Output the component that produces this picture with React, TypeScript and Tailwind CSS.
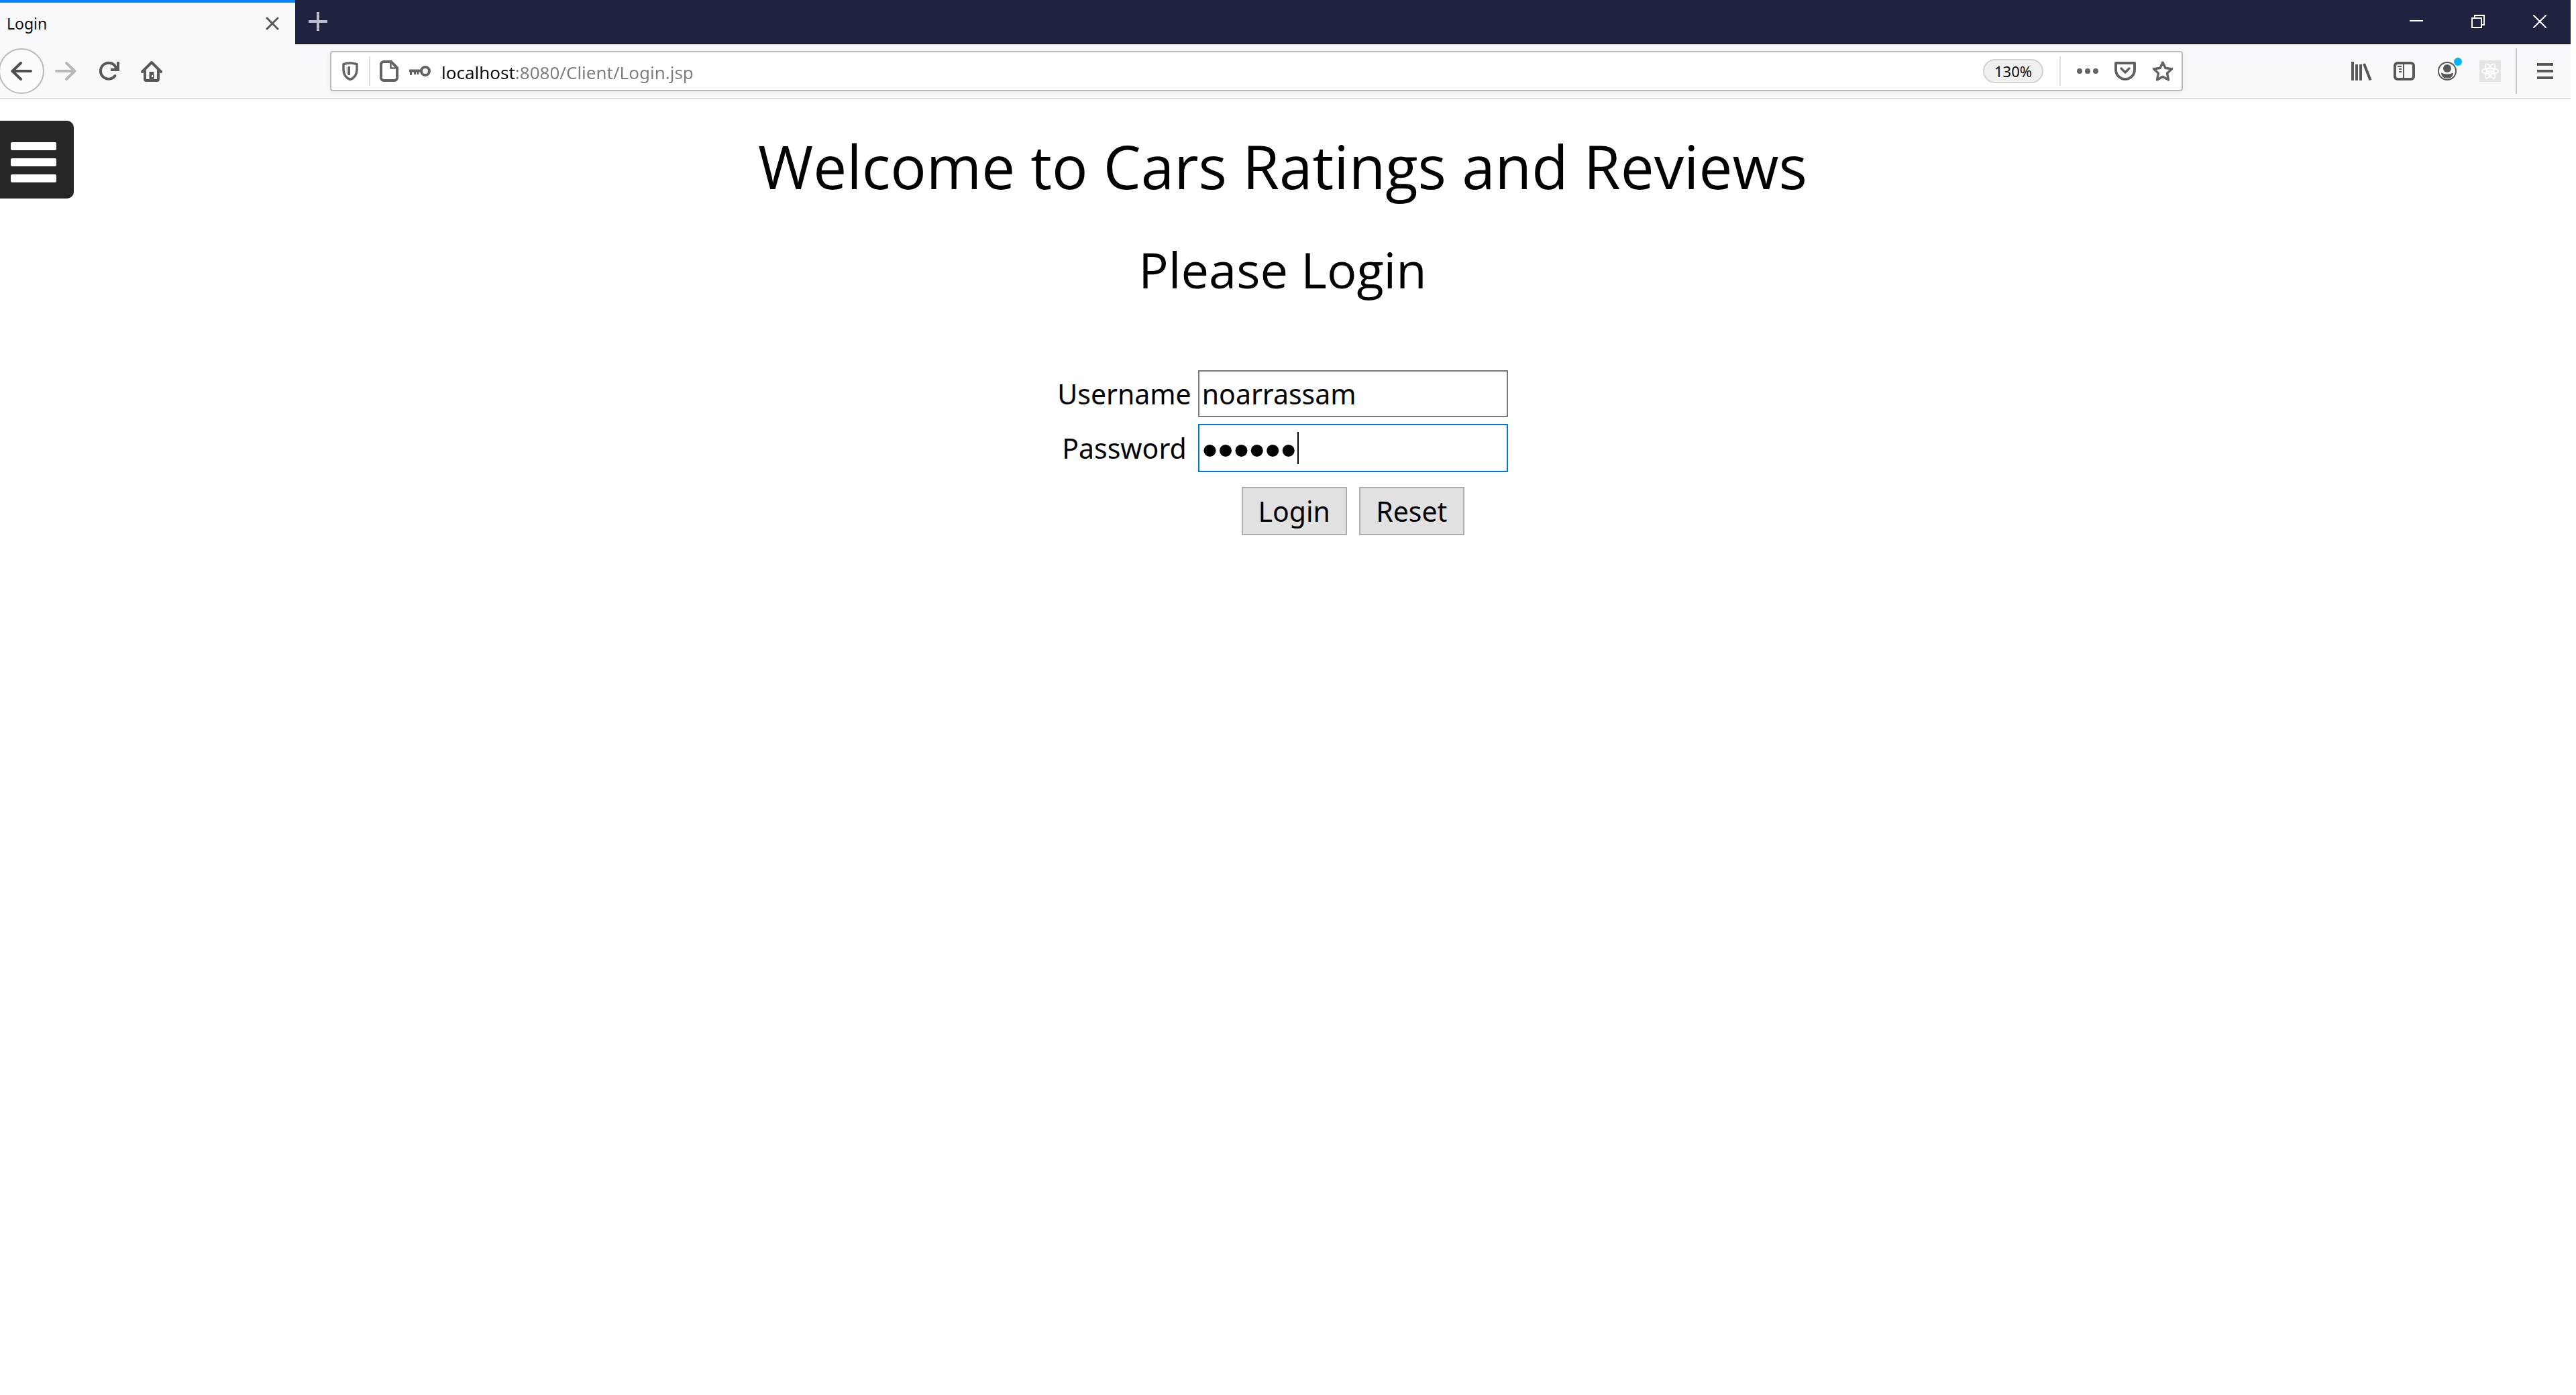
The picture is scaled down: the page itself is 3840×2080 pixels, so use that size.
import { useState, type ReactNode } from "react";

function Icon({ children, className = "size-8" }: { children: ReactNode; className?: string }) {
  return (
    <svg viewBox="0 0 32 32" className={className} fill="none" stroke="currentColor" strokeWidth="4" aria-hidden="true">
      {children}
    </svg>
  );
}

function ToolButton({ label, children }: { label: string; children: ReactNode }) {
  return (
    <button type="button" aria-label={label} className="flex h-16 w-16 shrink-0 items-center justify-center text-[#58585a]">
      {children}
    </button>
  );
}

function WindowButton({ label, children }: { label: string; children: ReactNode }) {
  return (
    <button type="button" aria-label={label} className="flex h-16 w-[92px] items-center justify-center text-white">
      <svg viewBox="0 0 20 20" className="size-5" fill="none" stroke="currentColor" strokeWidth="2" aria-hidden="true">
        {children}
      </svg>
    </button>
  );
}

function TabStrip() {
  return (
    <div className="flex h-[66px] bg-[#202340]">
      <div className="flex w-[440px] items-center justify-between border-t-4 border-[#0a84ff] bg-[#f9f9fb] pr-6 pl-2.5">
        <span className="text-[23px] leading-8 text-[#0c0c0d]">Login</span>
        <button type="button" aria-label="Close tab" className="text-[#58585a]">
          <svg viewBox="0 0 20 20" className="size-5" fill="none" stroke="currentColor" strokeWidth="3" strokeLinecap="round" aria-hidden="true">
            <path d="M2 2l16 16M18 2L2 18" />
          </svg>
        </button>
      </div>
      <div className="flex flex-1 justify-between border-b-2 border-[#1b1830]">
        <button type="button" aria-label="New tab" className="flex h-16 w-[68px] items-center justify-center text-[#bcbdc6]">
          <Icon>
            <path d="M16 2v28M2 16h28" />
          </Icon>
        </button>
        <div className="flex">
          <WindowButton label="Minimize">
            <path d="M0 9h20" />
          </WindowButton>
          <WindowButton label="Restore">
            <path d="M1 5h14v14H1zM5 5V1h14v14h-4" />
          </WindowButton>
          <WindowButton label="Close window">
            <path d="M0 0l20 20M20 0L0 20" />
          </WindowButton>
        </div>
      </div>
    </div>
  );
}

function AddressBar() {
  const [url, setUrl] = useState("localhost:8080/Client/Login.jsp");
  return (
    <div className="flex h-[60px] min-w-0 flex-1 items-center rounded-sm border-2 border-[#bcbcc0] bg-white text-[#636363] shadow-[0_2px_8px_rgba(0,0,0,0.06)]">
      <button type="button" aria-label="Tracking protection" className="flex w-14 justify-center">
        <Icon>
          <path d="M16 4c3.500 0 7 .6 10 1.600V14c0 7-3.500 12-10 14.500C9.500 26 6 21 6 14V5.600C9 4.600 12.500 4 16 4z" strokeLinejoin="round" strokeWidth="3.500" />
          <path d="M11.500 10v5c0 3 .5 5 1.500 6.500" strokeWidth="2" opacity="0.5" />
          <path d="M14.500 9v13" strokeWidth="3" />
        </Icon>
      </button>
      <span className="h-11 w-0.5 bg-[#dedee0]" />
      <button type="button" aria-label="Site information" className="ml-3 flex">
        <Icon>
          <path d="M8 2h11l9 9v15a4 4 0 0 1-4 4H8a4 4 0 0 1-4-4V6a4 4 0 0 1 4-4z" />
          <path d="M18.500 3v8.500H28" strokeWidth="2.500" />
        </Icon>
      </button>
      <button type="button" aria-label="Saved logins" className="ml-3.5 flex">
        <Icon>
          <circle cx="24" cy="16" r="6" />
          <path d="M0 15.500h18" />
          <path d="M2.500 16v6M8.500 16v5M13 16v5" strokeWidth="3" />
        </Icon>
      </button>
      <input
        aria-label="Address"
        value={url}
        onChange={(e) => setUrl(e.target.value)}
        className="ml-4 h-12 min-w-0 flex-1 bg-[linear-gradient(to_right,#0c0c0d_110px,#7c7c7e_110px)] bg-clip-text pt-1 text-[26px] text-transparent caret-black outline-none"
      />
      <button type="button" className="h-9 w-[90px] rounded-full border-2 border-[#d2d2d4] bg-[#f0f0f1] text-[22px] leading-8 text-[#0c0c0d]">
        130%
      </button>
      <span className="ml-6 h-11 w-0.5 bg-[#dedee0]" />
      <div className="flex items-center gap-6 pr-3 pl-6">
        <button type="button" aria-label="Page actions">
          <Icon>
            <g fill="currentColor" stroke="none">
              <circle cx="4" cy="16" r="4" />
              <circle cx="16" cy="16" r="4" />
              <circle cx="28" cy="16" r="4" />
            </g>
          </Icon>
        </button>
        <button type="button" aria-label="Save to Pocket">
          <Icon>
            <path d="M2 4h28v10a14 14 0 0 1-28 0z" strokeLinejoin="round" />
            <path d="M10 12l6 6 6-6" strokeWidth="3.500" strokeLinecap="round" strokeLinejoin="round" />
          </Icon>
        </button>
        <button type="button" aria-label="Bookmark this page">
          <Icon>
            <path d="M16 3l4 8.500 9.500 1.200-7 6.500 2 9.800L16 24.400 7.500 29l2-9.800-7-6.500L12 11.500z" strokeWidth="3.500" strokeLinejoin="round" />
          </Icon>
        </button>
      </div>
    </div>
  );
}

function Toolbar() {
  return (
    <div className="flex h-[82px] items-center border-b-2 border-[#e1e1e2] bg-[#f9f9fb]">
      <button type="button" aria-label="Back" className="-ml-0.5 flex size-[68px] shrink-0 items-center justify-center rounded-full border-2 border-[#b9b9bb] bg-[#fcfcfd] text-[#4f4f51]">
        <Icon>
          <path d="M30 16H3M15 4L2.500 16 15 28" strokeLinecap="round" strokeLinejoin="round" />
        </Icon>
      </button>
      <button type="button" aria-label="Forward" disabled className="flex h-16 w-16 shrink-0 items-center justify-center text-[#b7b7b9]">
        <Icon>
          <path d="M2 16h27M17 4l12.500 12L17 28" strokeLinecap="round" strokeLinejoin="round" />
        </Icon>
      </button>
      <ToolButton label="Reload">
        <Icon>
          <path d="M25.500 23A12 12 0 1 1 27 11" strokeLinecap="round" />
          <path d="M32 2v14H19v-4h5l4-4V2z" fill="currentColor" stroke="none" />
        </Icon>
      </ToolButton>
      <ToolButton label="Home">
        <Icon>
          <path d="M2 17L16 3l14 14" strokeLinecap="round" strokeLinejoin="round" />
          <path d="M6 15v13a2 2 0 0 0 2 2h16a2 2 0 0 0 2-2V15" />
          <path d="M12.500 30V17h7v13z" fill="currentColor" stroke="none" />
          <path d="M17 22v3" stroke="#f9f9fb" strokeWidth="2" />
        </Icon>
      </ToolButton>
      <div className="w-[234px]" />
      <AddressBar />
      <div className="w-[234px]" />
      <ToolButton label="Library">
        <Icon>
          <path d="M3 2v28M9 6v24M15 6v24" />
          <path d="M20 5l9.500 24.500" />
        </Icon>
      </ToolButton>
      <ToolButton label="Sidebars">
        <Icon>
          <rect x="2" y="4" width="28" height="24" rx="4" />
          <path d="M15 4v24" strokeWidth="2" />
          <path d="M6 9h6M8 13h4M8 17h4" strokeWidth="2" />
        </Icon>
      </ToolButton>
      <div className="relative">
        <ToolButton label="Account">
          <Icon>
            <circle cx="16" cy="16" r="13" strokeWidth="2" />
            <circle cx="16" cy="12" r="6" fill="currentColor" stroke="none" />
            <path d="M7 18.500c2 .5 4 2 9 2s7-1.500 9-2c0 5-4 8.500-9 8.500s-9-3.500-9-8.500z" fill="currentColor" stroke="none" />
          </Icon>
        </ToolButton>
        <span className="absolute top-3 right-2.5 size-3 rounded-full bg-[#00b3ff]" />
      </div>
      <ToolButton label="React developer tools">
        <span className="flex size-8 items-center justify-center bg-[#e4e4e5] text-white">
          <Icon className="size-7">
            <g strokeWidth="2">
              <ellipse cx="16" cy="16" rx="14" ry="5" />
              <ellipse cx="16" cy="16" rx="14" ry="5" transform="rotate(60 16 16)" />
              <ellipse cx="16" cy="16" rx="14" ry="5" transform="rotate(120 16 16)" />
              <circle cx="16" cy="16" r="2" />
            </g>
          </Icon>
        </span>
      </ToolButton>
      <span className="ml-1.5 h-[68px] w-0.5 bg-[#c6c6c8]" />
      <div className="pr-1.5 pl-2.5">
        <ToolButton label="Open menu">
          <Icon>
            <path d="M4 6h24M4 16h24M4 26h24" />
          </Icon>
        </ToolButton>
      </div>
    </div>
  );
}

function LoginPage() {
  const [username, setUsername] = useState("noarrassam");
  const [password, setPassword] = useState("secret");
  const reset = () => {
    setUsername("");
    setPassword("");
  };
  return (
    <main className="relative pr-2 text-black">
      <button type="button" aria-label="Toggle navigation" className="absolute top-8 left-0 flex h-[116px] w-[110px] flex-col justify-center gap-3 rounded-r-[10px] bg-[#262626] pt-2 pl-4">
        <span className="h-3 w-[68px] rounded-xs bg-white" />
        <span className="h-3 w-[68px] rounded-xs bg-white" />
        <span className="h-3 w-[68px] rounded-xs bg-white" />
      </button>
      <h1 className="pt-11 text-center font-['Open_Sans',sans-serif] text-[89px] leading-[112px]">Welcome to Cars Ratings and Reviews</h1>
      <h2 className="mt-[42px] text-center font-['Open_Sans',sans-serif] text-[74px] leading-[112px]">Please Login</h2>
      <form className="mt-[94px] flex justify-center text-[41px] leading-[56px]" onSubmit={(e) => e.preventDefault()}>
        <div className="grid grid-cols-[auto_462px] items-center gap-x-2.5 gap-y-[10px]">
          <label htmlFor="username" className="text-center">Username</label>
          <input
            id="username"
            value={username}
            onChange={(e) => setUsername(e.target.value)}
            className="h-[70px] border-2 border-[#7a7a7a] bg-white px-1 outline-none"
          />
          <label htmlFor="password" className="text-center">Password</label>
          <div className="relative">
            <input
              id="password"
              type="password"
              value={password}
              onChange={(e) => setPassword(e.target.value)}
              className="block h-[72px] w-full border-2 border-[#0078d7] bg-white px-1 pt-1 font-['Liberation_Sans',sans-serif] text-[67px] outline-none"
            />
            <span className="absolute top-3 left-[148px] h-12 w-0.5 bg-black" />
          </div>
          <div className="col-start-2 mt-3 flex justify-center gap-[18px]">
            <button type="submit" className="h-[72px] w-[157px] border-2 border-[#adadad] bg-[#e1e1e1]">Login</button>
            <button type="button" onClick={reset} className="h-[72px] w-[157px] border-2 border-[#adadad] bg-[#e1e1e1]">Reset</button>
          </div>
        </div>
      </form>
    </main>
  );
}

export default function App() {
  return (
    <div className="min-h-screen bg-white pr-2 font-['Noto_Sans',sans-serif]">
      <header>
        <TabStrip />
        <Toolbar />
      </header>
      <LoginPage />
    </div>
  );
}
